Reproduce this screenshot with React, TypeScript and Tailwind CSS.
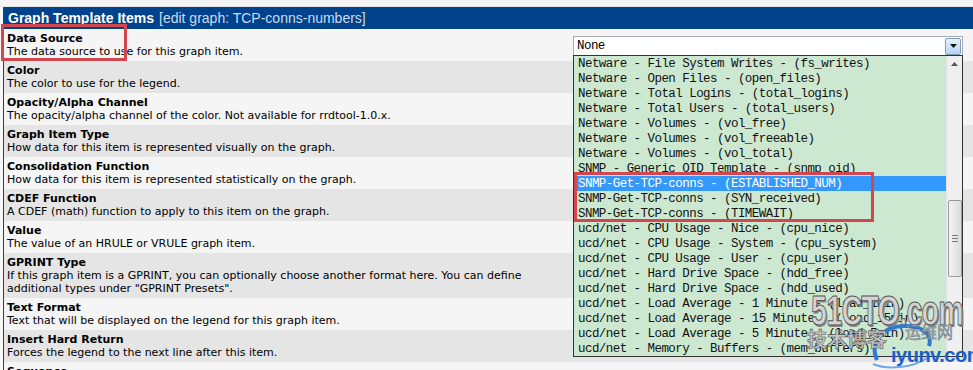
const rows = [
  { title: "Data Source", desc: ["The data source to use for this graph item."] },
  { title: "Color", desc: ["The color to use for the legend."] },
  { title: "Opacity/Alpha Channel", desc: ["The opacity/alpha channel of the color. Not available for rrdtool-1.0.x."] },
  { title: "Graph Item Type", desc: ["How data for this item is represented visually on the graph."] },
  { title: "Consolidation Function", desc: ["How data for this item is represented statistically on the graph."] },
  { title: "CDEF Function", desc: ["A CDEF (math) function to apply to this item on the graph."] },
  { title: "Value", desc: ["The value of an HRULE or VRULE graph item."] },
  {
    title: "GPRINT Type",
    desc: [
      "If this graph item is a GPRINT, you can optionally choose another format here. You can define",
      'additional types under "GPRINT Presets".',
    ],
  },
  { title: "Text Format", desc: ["Text that will be displayed on the legend for this graph item."] },
  { title: "Insert Hard Return", desc: ["Forces the legend to the next line after this item."] },
  { title: "Sequence", desc: [""] },
];

const options = [
  "Netware - File System Writes - (fs_writes)",
  "Netware - Open Files - (open_files)",
  "Netware - Total Logins - (total_logins)",
  "Netware - Total Users - (total_users)",
  "Netware - Volumes - (vol_free)",
  "Netware - Volumes - (vol_freeable)",
  "Netware - Volumes - (vol_total)",
  "SNMP - Generic OID Template - (snmp_oid)",
  "SNMP-Get-TCP-conns - (ESTABLISHED_NUM)",
  "SNMP-Get-TCP-conns - (SYN_received)",
  "SNMP-Get-TCP-conns - (TIMEWAIT)",
  "ucd/net - CPU Usage - Nice - (cpu_nice)",
  "ucd/net - CPU Usage - System - (cpu_system)",
  "ucd/net - CPU Usage - User - (cpu_user)",
  "ucd/net - Hard Drive Space - (hdd_free)",
  "ucd/net - Hard Drive Space - (hdd_used)",
  "ucd/net - Load Average - 1 Minute - (load_1min)",
  "ucd/net - Load Average - 15 Minute - (load_15min)",
  "ucd/net - Load Average - 5 Minute - (load_5min)",
  "ucd/net - Memory - Buffers - (mem_buffers)",
];

function Dropdown() {
  return (
    <>
      {/* closed select */}
      <div className="absolute left-[573px] top-[36px] w-[390px] h-[20px] bg-white border border-[#a5acb5] flex items-center font-['Liberation_Mono',monospace] text-[12.5px] tracking-[-0.55px] text-black">
        <span className="pl-[3px] pt-[1px] flex-1">None</span>
        <div className="w-[16px] h-[17px] mr-[1px] rounded-[2px] border border-[#7f9db9] bg-gradient-to-b from-[#e6f1fd] to-[#b7d3f2] flex items-center justify-center">
          <svg width="7" height="4" viewBox="0 0 7 4">
            <path d="M0 0h7L3.5 4z" fill="#111" />
          </svg>
        </div>
      </div>

      {/* open list */}
      <div className="absolute left-[573px] top-[55px] w-[390px] h-[302px] border border-[#333] bg-[#cde8d0] flex font-['Liberation_Mono',monospace] text-[12.5px] tracking-[-0.55px] text-[#111]">
        <div className="flex-1 flex flex-col pl-[1px]">
          {options.map((o, i) => (
            <div
              key={o}
              className={
                i === 8
                  ? "h-[15px] leading-[15px] pt-[1px] pl-[3px] whitespace-pre bg-[#3399ff] text-white"
                  : "h-[15px] leading-[15px] pt-[1px] pl-[3px] whitespace-pre"
              }
            >
              {o}
            </div>
          ))}
        </div>
        {/* scrollbar */}
        <div className="w-[16px] bg-[#efefef] border-l border-[#e2e2e2] flex flex-col items-center">
          <svg className="mt-[6px]" width="7" height="4" viewBox="0 0 7 4">
            <path d="M3.5 0L7 4H0z" fill="#555" />
          </svg>
          <div className="mt-[134px] w-[14px] h-[77px] rounded-[2px] border border-[#9a9a9a] bg-gradient-to-r from-[#f4f4f4] to-[#dcdcdc] flex flex-col items-center justify-center gap-[2px]">
            <div className="w-[6px] h-px bg-[#777]" />
            <div className="w-[6px] h-px bg-[#777]" />
            <div className="w-[6px] h-px bg-[#777]" />
          </div>
        </div>
      </div>

      {/* highlight boxes */}
      <div className="absolute left-[1px] top-[24px] w-[126px] h-[37px] border-[3px] border-[#d2474e]" />
      <div className="absolute left-[574px] top-[172px] w-[300px] h-[50px] border-[3px] border-[#d2474e]" />
    </>
  );
}

function Watermark() {
  return (
    <div className="absolute left-[805px] top-[290px] w-[168px] h-[80px] pointer-events-none">
      <div className="absolute left-[6px] top-[1px] font-['Liberation_Sans',sans-serif] font-bold text-[42px] leading-[40px] text-[#d4d4d4] tracking-[-1px] origin-left scale-x-[0.68] [-webkit-text-stroke:1px_#555] [text-shadow:2px_2px_0_#8a8a8a]">
        51CTO.com
      </div>
      <svg className="absolute left-[62px] top-[30px]" width="72" height="50" viewBox="0 0 72 50">
        <path d="M10 40 C2 22 16 6 38 6 C54 6 66 14 62 26" stroke="#2f78d6" strokeWidth="4" fill="none" />
        <path d="M6 44 C20 50 46 48 60 38" stroke="#6aa8ee" strokeWidth="2" fill="none" />
      </svg>
      <div className="absolute left-[2px] top-[38px] font-['Noto_Sans_CJK_SC',sans-serif] font-bold text-[20px] leading-[22px] text-[#c4c4c4] [-webkit-text-stroke:0.6px_#555]">
        技术博客
      </div>
      <div className="absolute left-[100px] top-[32px] font-['Noto_Sans_CJK_SC',sans-serif] text-[16px] leading-[18px] text-[#b0b8c8] [-webkit-text-stroke:0.4px_#556]">
        运维网
      </div>
      <div className="absolute left-[86px] top-[55px] font-['Liberation_Sans',sans-serif] font-bold text-[20px] leading-[20px] text-[#1c60c6] tracking-[-0.5px]">
        iyunv.com
      </div>
    </div>
  );
}

export default function App() {
  return (
    <div className="relative w-[973px] h-[370px] overflow-hidden bg-[#f7f7f7] font-['DejaVu_Sans',Verdana,sans-serif]">
      <div className="h-[7px] bg-[#f3f3f3] border-b border-[#e4e4e4]" />
      <div className="ml-[3px] border-l border-[#2b3f5c]">
        <div className="h-[22px] bg-[#00438c] flex items-center pl-[4px] pt-[1px] whitespace-nowrap font-['Liberation_Sans',sans-serif] text-[14px]">
          <span className="font-bold text-white">Graph Template Items</span>
          <span className="ml-[5px] text-[#c9dcf3]">[edit graph: TCP-conns-numbers]</span>
        </div>
        {rows.map((r, i) => (
          <div
            key={r.title}
            className={
              i % 2 === 0
                ? "bg-[#f5f5f5] pl-[3px] pt-[3px] pb-[3px] text-[11px] leading-[13px] text-black"
                : "bg-[#e5e5e5] pl-[3px] pt-[3px] pb-[3px] text-[11px] leading-[13px] text-black"
            }
          >
            <div className="font-bold">{r.title}</div>
            {r.desc.map((d, j) => (
              <div key={j} className="whitespace-pre h-[13px]">
                {d}
              </div>
            ))}
          </div>
        ))}
      </div>
      <Dropdown />
      <Watermark />
    </div>
  );
}
